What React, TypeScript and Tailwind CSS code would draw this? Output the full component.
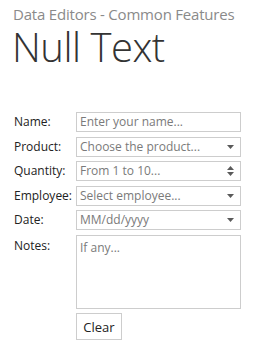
import React from "react";

const Caret = ({ up = false }: { up?: boolean }) => (
  <svg width="7" height="4" viewBox="0 0 7 4" className="block">
    {up ? (
      <path d="M0 4 L3.5 0 L7 4 Z" fill="#5a5a5a" />
    ) : (
      <path d="M0 0 L7 0 L3.5 4 Z" fill="#5a5a5a" />
    )}
  </svg>
);

const Field = ({
  placeholder,
  kind,
}: {
  placeholder: string;
  kind?: "drop" | "spin";
}) => (
  <div className="h-[20px] w-[165px] border border-[#cdcdcd] bg-white flex items-center pl-[3px] pr-[6px]">
    <span className="flex-1 text-[12px] text-[#7a7a7a] leading-[16px] whitespace-nowrap">
      {placeholder}
    </span>
    {kind === "drop" && <Caret />}
    {kind === "spin" && (
      <div className="flex flex-col gap-[2px]">
        <Caret up />
        <Caret />
      </div>
    )}
  </div>
);

const rows: { label: string; placeholder: string; kind?: "drop" | "spin" }[] = [
  { label: "Name:", placeholder: "Enter your name..." },
  { label: "Product:", placeholder: "Choose the product...", kind: "drop" },
  { label: "Quantity:", placeholder: "From 1 to 10...", kind: "spin" },
  { label: "Employee:", placeholder: "Select employee...", kind: "drop" },
  { label: "Date:", placeholder: "MM/dd/yyyy", kind: "drop" },
];

export default function App() {
  return (
    <div className="w-[257px] h-[348px] bg-white font-['Open_Sans',sans-serif] text-[#333] overflow-hidden">
      <div className="pl-[13px] pt-[5px]">
        <div className="text-[15px] leading-[18px] text-[#8a8a8a] tracking-[-0.2px]">
          Data Editors - Common Features
        </div>
        <div className="mt-[2px] text-[40px] leading-[44px] font-light text-[#333] -ml-[1px] tracking-[-0.5px]">
          Null Text
        </div>
      </div>

      <div className="pl-[14px] pt-[43px] flex flex-col gap-[4.5px]">
        {rows.map((r) => (
          <div key={r.label} className="flex items-center">
            <div className="w-[62px] text-[12px] leading-[16px] text-[#222]">{r.label}</div>
            <Field placeholder={r.placeholder} kind={r.kind} />
          </div>
        ))}
        <div className="flex">
          <div className="w-[62px] text-[12px] leading-[16px] text-[#222] pt-[3px]">Notes:</div>
          <div className="h-[74px] w-[165px] border border-[#cdcdcd] bg-white px-[3px] pt-[4px] text-[12px] leading-[16px] text-[#7a7a7a]">
            If any...
          </div>
        </div>
        <div className="flex">
          <div className="w-[62px]" />
          <button className="h-[27px] w-[46px] border border-[#cdcdcd] bg-white text-[13px] leading-[16px] text-[#222]">
            Clear
          </button>
        </div>
      </div>
    </div>
  );
}
